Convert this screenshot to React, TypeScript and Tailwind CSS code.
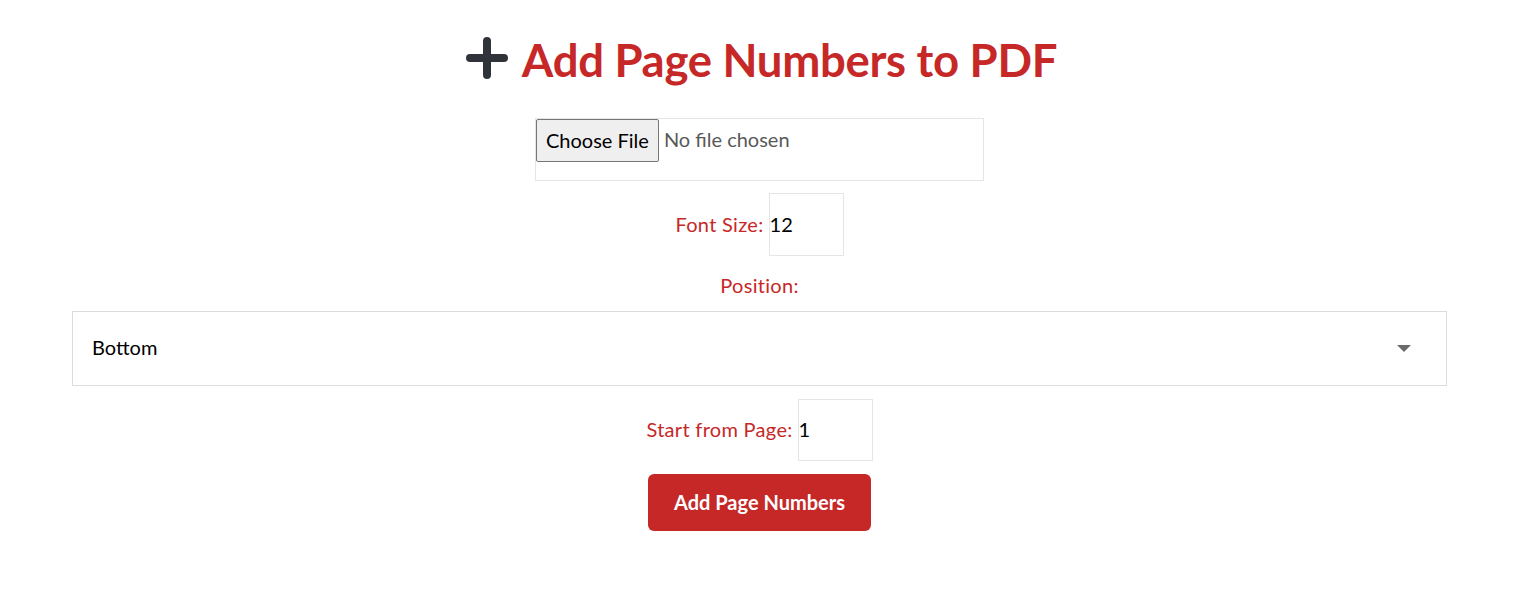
import React from "react";

const font = { fontFamily: "Lato, 'Noto Sans', sans-serif" };

export default function App() {
  return (
    <div className="min-h-[605px] bg-white flex flex-col items-center pl-[72px] pr-[76px]" style={font}>
      <div className="mt-[28px] h-[64px] flex items-center gap-[14px] pl-[4px]">
        <svg width="42" height="42" viewBox="0 0 42 42" className="mt-[-4px]">
          <path d="M21 4 V38 M4 21 H38" stroke="#30343a" strokeWidth="8" strokeLinecap="round" />
        </svg>
        <h1 className="text-[#c62828] text-[45.5px] font-bold leading-none tracking-[-0.3px]">Add Page Numbers to PDF</h1>
      </div>

      <div className="mt-[26px] w-[449px] h-[63px] border border-[#e5e5e5] flex items-start">
        <div className="h-[43px] px-[9px] pb-[2px] flex items-center bg-[#efefef] border border-[#767676] rounded-[2px] text-[20px] text-black">
          Choose File
        </div>
        <span className="ml-[5px] mt-[9px] text-[20px] text-[#595959] leading-[22px]">No file chosen</span>
      </div>

      <div className="mt-[12px] flex items-center">
        <span className="text-[20px] tracking-[0.3px] text-[#c62828] pb-[2px]">Font Size:</span>
        <div className="ml-[5px] w-[75px] h-[63px] pb-[2px] border border-[#e5e5e5] flex items-center text-[20px] text-black">12</div>
      </div>

      <div className="mt-[15px] h-[27px] flex items-center text-[20px] tracking-[0.3px] text-[#c62828]">Position:</div>

      <div className="mt-[13px] w-full h-[75px] border border-[#dcdcdc] flex items-center justify-between pl-[19px] pr-[35px]">
        <span className="text-[20px] text-black pb-[3px]">Bottom</span>
        <svg width="14" height="7" viewBox="0 0 14 7">
          <path d="M0 0 H14 L7 7 Z" fill="#6b6b6b" />
        </svg>
      </div>

      <div className="mt-[13px] flex items-center">
        <span className="text-[20px] tracking-[0.3px] text-[#c62828] pb-[2px]">Start from Page:</span>
        <div className="ml-[5px] w-[75px] h-[62px] pb-[2px] border border-[#e5e5e5] flex items-center text-[20px] text-black">1</div>
      </div>

      <button className="mt-[13px] w-[223px] h-[57px] pb-[2px] rounded-[6px] bg-[#c62828] text-white text-[20px] font-bold">
        Add Page Numbers
      </button>
    </div>
  );
}
